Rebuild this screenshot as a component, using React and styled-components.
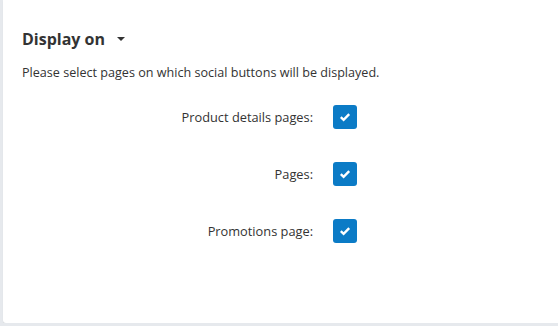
import React, { useState } from 'react';
import styled, { createGlobalStyle } from 'styled-components';

const GlobalStyle = createGlobalStyle`
  html, body {
    margin: 0;
    padding: 0;
    background: #e6e9ed;
  }
  body {
    font-family: 'Open Sans', 'Liberation Sans', sans-serif;
    color: #333;
  }
`;

const Card = styled.section`
  margin-left: 3px;
  height: 323px;
  box-sizing: border-box;
  background: #fff;
  border-bottom-left-radius: 3px;
  box-shadow: 0 1px 1px rgba(0, 0, 0, 0.08);
  padding: 27px 19px 0;
`;

const Heading = styled.h2`
  display: flex;
  align-items: center;
  margin: 0;
  font-size: 16px;
  line-height: 24px;
  font-weight: 700;
  color: #333;
  cursor: pointer;

  .caret {
    margin-left: 12px;
    width: 0;
    height: 0;
    border-left: 4px solid transparent;
    border-right: 4px solid transparent;
    border-top: 4px solid #333;
  }
`;

const Hint = styled.p`
  margin: 13px 0 0;
  font-size: 12.6px;
  line-height: 18px;
`;

const Fields = styled.div`
  margin-top: 23px;
  display: grid;
  grid-template-columns: 291px auto;
  column-gap: 20px;
  row-gap: 33px;
  align-items: center;
`;

const Label = styled.label`
  text-align: right;
  font-size: 12.8px;
  line-height: 24px;
`;

const Check = styled.button`
  width: 24px;
  height: 24px;
  padding: 0;
  border: 0;
  border-radius: 3px;
  background: ${(p) => (p.checked ? '#0b7bc6' : '#fff')};
  box-shadow: ${(p) => (p.checked ? 'none' : 'inset 0 0 0 1px #bbb')};
  display: flex;
  align-items: center;
  justify-content: center;
  cursor: pointer;
`;

const pages = [
  { id: 'product', label: 'Product details pages:' },
  { id: 'pages', label: 'Pages:' },
  { id: 'promo', label: 'Promotions page:' },
];

const App = () => {
  const [checked, setChecked] = useState({ product: true, pages: true, promo: true });

  return (
    <>
      <GlobalStyle />
      <Card>
        <Heading>
          Display on <span className="caret" />
        </Heading>
        <Hint>Please select pages on which social buttons will be displayed.</Hint>
        <Fields>
          {pages.map((p) => (
            <React.Fragment key={p.id}>
              <Label htmlFor={p.id}>{p.label}</Label>
              <Check
                id={p.id}
                checked={checked[p.id]}
                onClick={() => setChecked({ ...checked, [p.id]: !checked[p.id] })}
              >
                {checked[p.id] && (
                  <svg width="12" height="10" viewBox="0 0 12 10">
                    <path d="M1.8 5.2 L4.6 7.8 L10.2 2.2" fill="none" stroke="#fff" strokeWidth="2.4" />
                  </svg>
                )}
              </Check>
            </React.Fragment>
          ))}
        </Fields>
      </Card>
    </>
  );
};

export default App;
